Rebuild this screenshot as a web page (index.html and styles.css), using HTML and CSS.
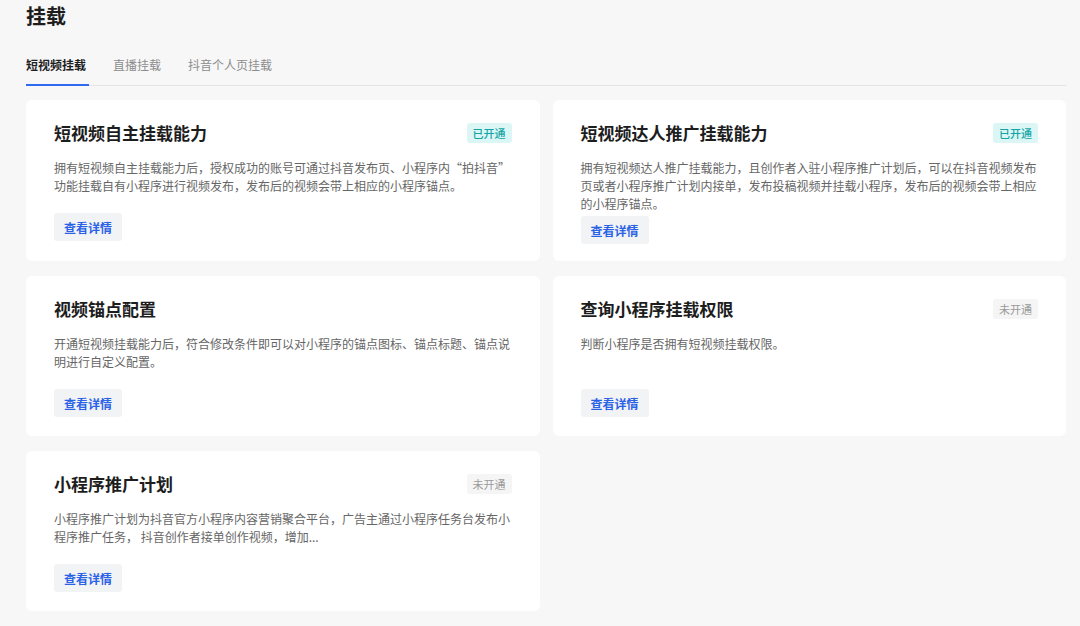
FILE: index.html
```html
<!doctype html>
<html lang="zh-CN">
<head>
  <meta charset="utf-8" />
  <title>挂载</title>
  <link rel="stylesheet" href="styles.css">
</head>
<body>
  <div class="page">
    <h1>挂载</h1>

    <div class="tabs">
      <div class="tab active">短视频挂载</div>
      <div class="tab">直播挂载</div>
      <div class="tab">抖音个人页挂载</div>
    </div>

    <div class="cards">
      <div class="card">
        <div class="card-head">
          <div class="card-title">短视频自主挂载能力</div>
          <span class="badge on">已开通</span>
        </div>
        <p class="desc">拥有短视频自主挂载能力后，授权成功的账号可通过抖音发布页、小程序内“拍抖音”功能挂载自有小程序进行视频发布，发布后的视频会带上相应的小程序锚点。</p>
        <button class="btn">查看详情</button>
      </div>

      <div class="card">
        <div class="card-head">
          <div class="card-title">短视频达人推广挂载能力</div>
          <span class="badge on">已开通</span>
        </div>
        <p class="desc">拥有短视频达人推广挂载能力，且创作者入驻小程序推广计划后，可以在抖音视频发布页或者小程序推广计划内接单，发布投稿视频并挂载小程序，发布后的视频会带上相应的小程序锚点。</p>
        <button class="btn">查看详情</button>
      </div>

      <div class="card">
        <div class="card-head">
          <div class="card-title">视频锚点配置</div>
        </div>
        <p class="desc">开通短视频挂载能力后，符合修改条件即可以对小程序的锚点图标、锚点标题、锚点说明进行自定义配置。</p>
        <button class="btn">查看详情</button>
      </div>

      <div class="card">
        <div class="card-head">
          <div class="card-title">查询小程序挂载权限</div>
          <span class="badge off">未开通</span>
        </div>
        <p class="desc">判断小程序是否拥有短视频挂载权限。</p>
        <button class="btn">查看详情</button>
      </div>

      <div class="card">
        <div class="card-head">
          <div class="card-title">小程序推广计划</div>
          <span class="badge off">未开通</span>
        </div>
        <p class="desc">小程序推广计划为抖音官方小程序内容营销聚合平台，广告主通过小程序任务台发布小程序推广任务， 抖音创作者接单创作视频，增加...</p>
        <button class="btn">查看详情</button>
      </div>
    </div>
  </div>
</body>
</html>
```

FILE: styles.css
```css
*{box-sizing:border-box}
html,body{height:100%}
body{
  margin:0;
  background:#f7f7f8;
  color:#1f1f1f;
  font-family:"Noto Sans CJK SC","Noto Sans",sans-serif;
  -webkit-font-smoothing:antialiased;
}

.page{
  padding:3px 14px 0 26px;
}

h1{
  margin:0;
  font-size:20px;
  line-height:26px;
  font-weight:700;
  color:#1d1d1d;
}

.tabs{
  display:flex;
  gap:27px;
  margin-top:25px;
  border-bottom:1px solid #e3e4e8;
}
.tab{
  font-size:12px;
  line-height:18px;
  color:#8c8c8c;
  padding:2px 0 10px;
  border-bottom:2px solid transparent;
  margin-bottom:-1px;
}
.tab.active{
  color:#1f1f1f;
  font-weight:700;
  border-bottom-color:#2f6bf0;
  padding-right:3px;
  margin-right:-3px;
}

.cards{
  display:grid;
  grid-template-columns:1fr 1fr;
  column-gap:13px;
  row-gap:15px;
  margin-top:14px;
}

.card{
  background:#fff;
  border-radius:6px;
  padding:21px 28px 17px;
  min-height:160px;
}

.card-head{
  display:flex;
  align-items:center;
  justify-content:space-between;
  height:24px;
}
.card-title{
  font-size:17px;
  line-height:24px;
  font-weight:700;
  color:#1d1d1d;
}

.badge{
  font-size:11px;
  line-height:20px;
  padding:0 6px;
  border-radius:3px;
}
.badge.on{background:#dcf6f6;color:#13a5a5;font-weight:500}
.badge.off{background:#f5f5f5;color:#9a9a9a}

.desc{
  margin:14px 0 0;
  font-size:12px;
  line-height:18px;
  color:#666;
  min-height:51px;
}

.btn{
  display:block;
  margin-top:3px;
  border:0;
  height:28px;
  padding:0 10px;
  border-radius:3px;
  background:#f2f3f5;
  color:#2a62e6;
  font-family:inherit;
  font-size:12px;
  font-weight:700;
  cursor:pointer;
}
```
